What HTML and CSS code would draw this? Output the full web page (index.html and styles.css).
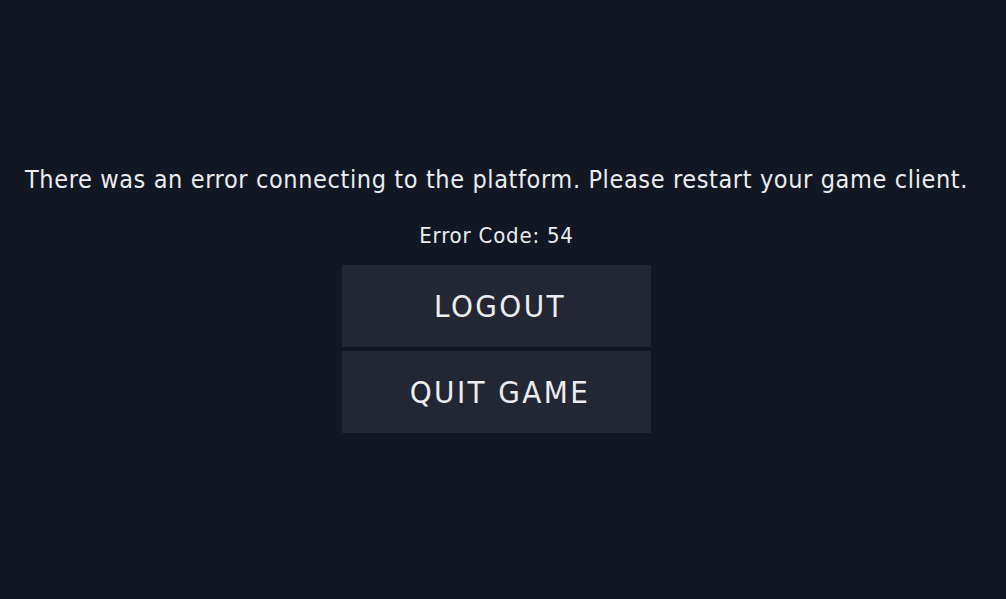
FILE: index.html
```html
<!DOCTYPE html>
<html lang="en">
<head>
    <meta charset="UTF-8">
    <title>Error</title>
    <link rel="stylesheet" href="styles.css">
</head>
<body>
    <div class="dialog">
        <p class="message">There was an error connecting to the platform. Please restart your game client.</p>
        <p class="code">Error Code: 54</p>
        <div class="actions">
            <button class="btn">LOGOUT</button>
            <button class="btn">QUIT GAME</button>
        </div>
    </div>
</body>
</html>
```

FILE: styles.css
```css
body {
    margin: 0;
    height: 599px;
    background: #111723;
    color: #ecedef;
    font-family: 'DejaVu Sans Condensed', 'DejaVu Sans', sans-serif;
    overflow: hidden;
}

.dialog {
    display: flex;
    flex-direction: column;
    align-items: center;
    padding-top: 162px;
    padding-right: 13px;
}

.message {
    margin: 0;
    font-size: 25px;
    line-height: 36px;
    letter-spacing: 0.62px;
}

.code {
    margin: 23px 0 0;
    font-size: 22px;
    line-height: 30px;
    letter-spacing: 0.8px;
}

.actions {
    display: flex;
    flex-direction: column;
    gap: 4px;
    margin-top: 14px;
}

.btn {
    width: 309px;
    height: 82px;
    padding: 0 0 0 7px;
    border: none;
    background: #232733;
    color: #ecedef;
    font-family: inherit;
    font-size: 31px;
    letter-spacing: 2.4px;
    cursor: pointer;
}
```
